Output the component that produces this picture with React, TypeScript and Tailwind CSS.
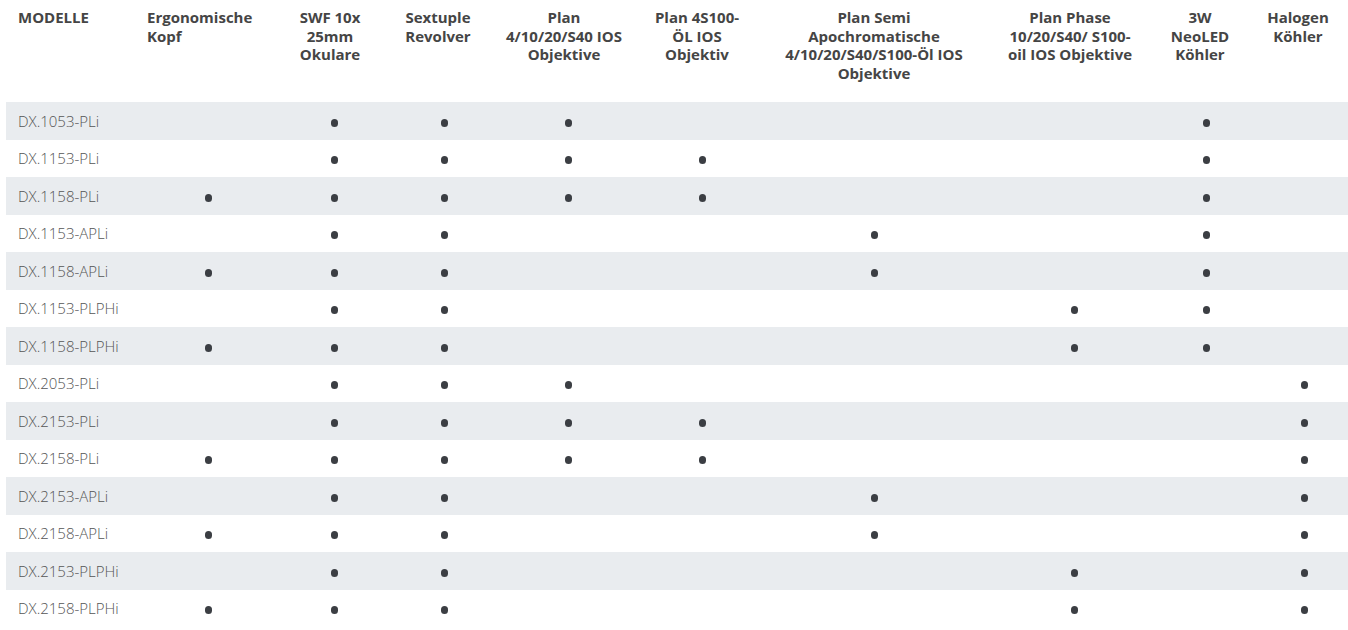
import type { ReactNode } from "react";

type Column = {
  width: string;
  head: ReactNode;
  headClass: string;
  dotClass: string;
};

const columns: Column[] = [
  {
    width: "w-[134px]",
    head: (
      <>
        Ergonomische
        <br />
        Kopf
      </>
    ),
    headClass: "text-left pl-[10px]",
    dotClass: "ml-2",
  },
  {
    width: "w-[118px]",
    head: (
      <>
        SWF 10x
        <br />
        25mm
        <br />
        Okulare
      </>
    ),
    headClass: "text-center",
    dotClass: "ml-2",
  },
  {
    width: "w-[98px]",
    head: (
      <>
        Sextuple
        <br />
        Revolver
      </>
    ),
    headClass: "text-center",
    dotClass: "ml-3",
  },
  {
    width: "w-[154px]",
    head: (
      <>
        Plan
        <br />
        4/10/20/S40 IOS
        <br />
        Objektive
      </>
    ),
    headClass: "text-center",
    dotClass: "ml-2",
  },
  {
    width: "w-[112px]",
    head: (
      <>
        Plan 4S100-
        <br />
        ÖL IOS
        <br />
        Objektiv
      </>
    ),
    headClass: "text-center",
    dotClass: "ml-[10px]",
  },
  {
    width: "w-[242px]",
    head: (
      <>
        Plan Semi
        <br />
        Apochromatische
        <br />
        4/10/20/S40/S100-Öl IOS
        <br />
        Objektive
      </>
    ),
    headClass: "text-center",
    dotClass: "",
  },
  {
    width: "w-[150px]",
    head: (
      <>
        Plan Phase
        <br />
        10/20/S40/ S100-
        <br />
        oil IOS Objektive
      </>
    ),
    headClass: "text-center",
    dotClass: "ml-2",
  },
  {
    width: "w-[110px]",
    head: (
      <>
        3W
        <br />
        NeoLED
        <br />
        Köhler
      </>
    ),
    headClass: "text-center",
    dotClass: "ml-3",
  },
  {
    width: "w-[93px]",
    head: (
      <>
        Halogen
        <br />
        Köhler
      </>
    ),
    headClass: "text-center pr-[7px]",
    dotClass: "ml-[5px]",
  },
];

// E = ergonomic head, W = SWF, R = revolver, P = plan, O = 4S100, A = semi apo,
// H = phase, L = 3W LED, K = halogen
const keys = ["E", "W", "R", "P", "O", "A", "H", "L", "K"];

const models: [string, string][] = [
  ["DX.1053-PLi", "WRPL"],
  ["DX.1153-PLi", "WRPOL"],
  ["DX.1158-PLi", "EWRPOL"],
  ["DX.1153-APLi", "WRAL"],
  ["DX.1158-APLi", "EWRAL"],
  ["DX.1153-PLPHi", "WRHL"],
  ["DX.1158-PLPHi", "EWRHL"],
  ["DX.2053-PLi", "WRPK"],
  ["DX.2153-PLi", "WRPOK"],
  ["DX.2158-PLi", "EWRPOK"],
  ["DX.2153-APLi", "WRAK"],
  ["DX.2158-APLi", "EWRAK"],
  ["DX.2153-PLPHi", "WRHK"],
  ["DX.2158-PLPHi", "EWRHK"],
];

function Dot({ className }: { className: string }) {
  return (
    <span
      className={`inline-block h-[8px] w-[7px] rounded-full bg-[#3b3e43] ${className}`}
    />
  );
}

export default function App() {
  return (
    <div className="min-h-screen bg-white pl-[6px] font-['Open_Sans',sans-serif]">
      <table className="w-[1342px] table-fixed border-collapse">
        <colgroup>
          <col className="w-[131px]" />
          {columns.map((col, i) => (
            <col key={i} className={col.width} />
          ))}
        </colgroup>
        <thead>
          <tr className="h-[102px] align-top text-[15px] font-bold leading-[18.5px] text-[#454545]">
            <th className="pl-[12px] pt-[8px] text-left text-[15px]">MODELLE</th>
            {columns.map((col, i) => (
              <th key={i} className={`pt-[8px] ${col.headClass}`}>
                {col.head}
              </th>
            ))}
          </tr>
        </thead>
        <tbody>
          {models.map(([name, features], r) => (
            <tr
              key={name}
              className={`h-[37.5px] ${r % 2 === 0 ? "bg-[#e9ecef]" : "bg-white"}`}
            >
              <td className="pl-[12px] align-middle text-[15px] font-light text-[#555]">
                {name}
              </td>
              {keys.map((k, c) => (
                <td key={k} className="p-0 text-center align-middle leading-none">
                  {features.includes(k) && <Dot className={columns[c].dotClass} />}
                </td>
              ))}
            </tr>
          ))}
        </tbody>
      </table>
    </div>
  );
}
